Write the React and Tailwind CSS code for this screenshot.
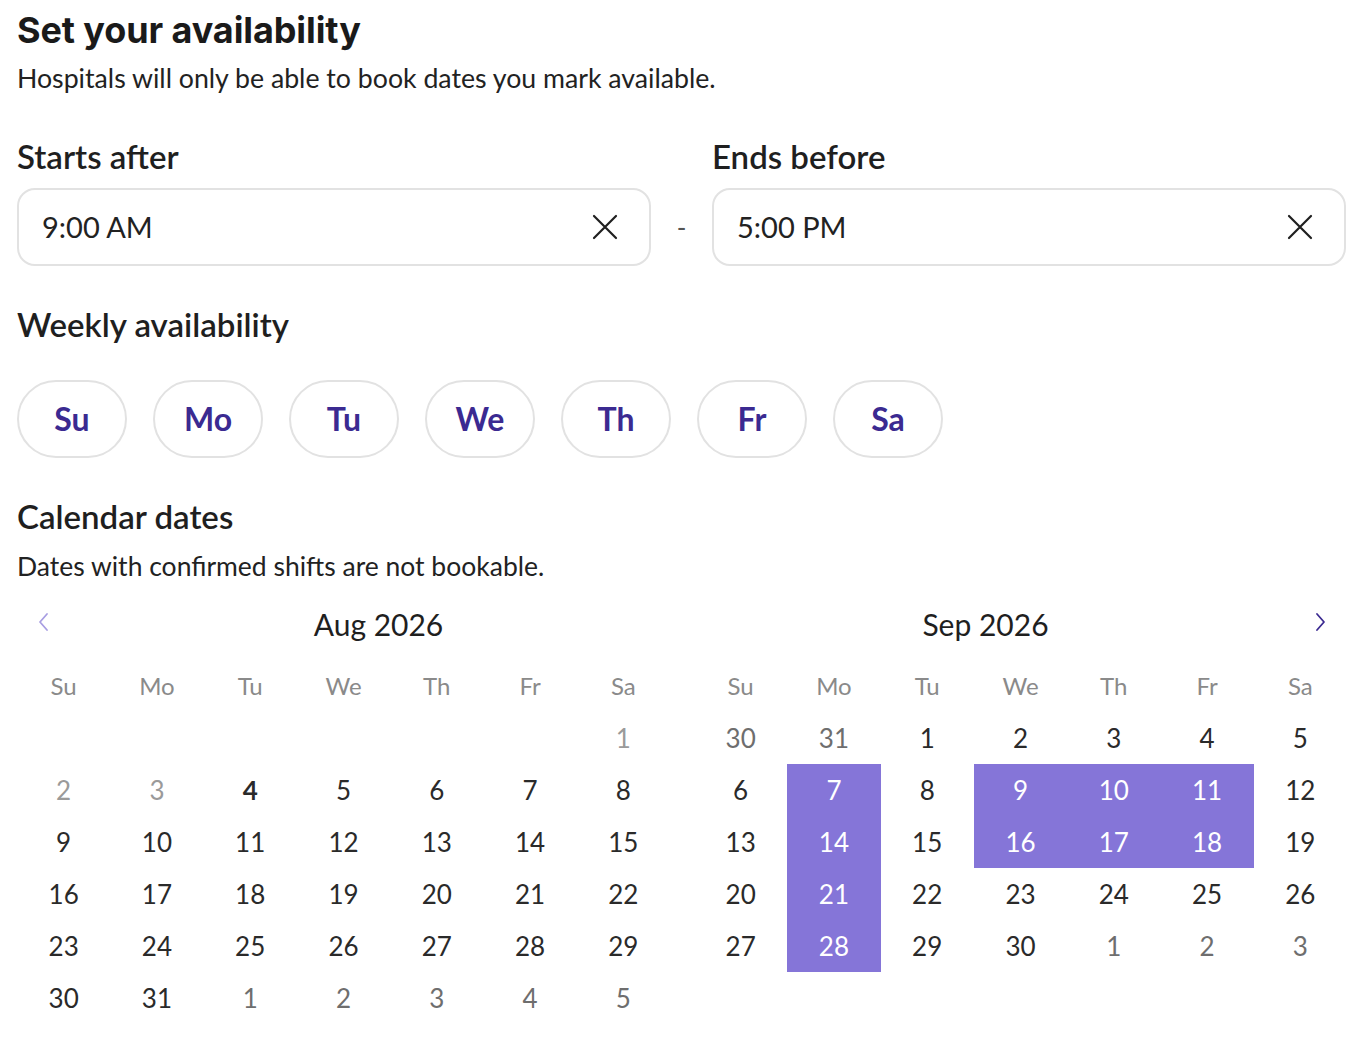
import React from "react";

const FONT = { fontFamily: "Lato, 'Liberation Sans', sans-serif" };
const TITLE_FONT = { fontFamily: "Inter, Lato, 'Liberation Sans', sans-serif" };

function XIcon() {
  return (
    <svg width="26" height="26" viewBox="0 0 26 26" fill="none">
      <path d="M2 2L24 24M24 2L2 24" stroke="#1f1f1f" strokeWidth="2.2" strokeLinecap="round" />
    </svg>
  );
}

function Chevron({ dir, color }) {
  return (
    <svg width="12" height="20" viewBox="0 0 12 20" fill="none">
      {dir === "left" ? (
        <path d="M10 2L3 10L10 18" stroke={color} strokeWidth="1.8" strokeLinecap="round" strokeLinejoin="round" />
      ) : (
        <path d="M2 2L9 10L2 18" stroke={color} strokeWidth="1.8" strokeLinecap="round" strokeLinejoin="round" />
      )}
    </svg>
  );
}

const WEEK = ["Su", "Mo", "Tu", "We", "Th", "Fr", "Sa"];

const AUG = [
  [["", "e"], ["", "e"], ["", "e"], ["", "e"], ["", "e"], ["", "e"], ["1", "p"]],
  [["2", "p"], ["3", "p"], ["4", "t"], ["5", "n"], ["6", "n"], ["7", "n"], ["8", "n"]],
  [["9", "n"], ["10", "n"], ["11", "n"], ["12", "n"], ["13", "n"], ["14", "n"], ["15", "n"]],
  [["16", "n"], ["17", "n"], ["18", "n"], ["19", "n"], ["20", "n"], ["21", "n"], ["22", "n"]],
  [["23", "n"], ["24", "n"], ["25", "n"], ["26", "n"], ["27", "n"], ["28", "n"], ["29", "n"]],
  [["30", "n"], ["31", "n"], ["1", "o"], ["2", "o"], ["3", "o"], ["4", "o"], ["5", "o"]],
];

const SEP = [
  [["30", "o"], ["31", "o"], ["1", "n"], ["2", "n"], ["3", "n"], ["4", "n"], ["5", "n"]],
  [["6", "n"], ["7", "s"], ["8", "n"], ["9", "s"], ["10", "s"], ["11", "s"], ["12", "n"]],
  [["13", "n"], ["14", "s"], ["15", "n"], ["16", "s"], ["17", "s"], ["18", "s"], ["19", "n"]],
  [["20", "n"], ["21", "s"], ["22", "n"], ["23", "n"], ["24", "n"], ["25", "n"], ["26", "n"]],
  [["27", "n"], ["28", "s"], ["29", "n"], ["30", "n"], ["1", "o"], ["2", "o"], ["3", "o"]],
];

function Cell({ v, k }) {
  if (k === "e") return <div className="h-[52px]" />;
  if (k === "s")
    return (
      <div className="h-[52px] flex items-center justify-center bg-[#8575d8] text-white text-[26px]">{v}</div>
    );
  const cls =
    k === "p"
      ? "text-[#9a9a9a]"
      : k === "o"
      ? "text-[#6e6e6e]"
      : k === "t"
      ? "text-[#2a2a2a] font-bold"
      : "text-[#2a2a2a]";
  return <div className={`h-[52px] flex items-center justify-center text-[26px] ${cls}`}>{v}</div>;
}

function Calendar({ title, rows, side }) {
  return (
    <div>
      <div className="flex items-center h-[40px]">
        {side === "left" ? (
          <div className="w-[70px] flex items-center justify-start pl-[20px] pb-[4px]">
            <Chevron dir="left" color="#a89ee2" />
          </div>
        ) : null}
        <div className="flex-1 text-center text-[30px] text-[#1f1f1f] leading-[40px]">{title}</div>
        {side === "right" ? (
          <div className="w-[70px] flex items-center justify-end pr-[20px] pb-[4px]">
            <Chevron dir="right" color="#3b2a91" />
          </div>
        ) : null}
      </div>
      <div className="grid grid-cols-7 mt-[16px]">
        {WEEK.map((w) => (
          <div key={w} className="h-[52px] flex items-center justify-center text-[24px] text-[#8a8a8a]">
            {w}
          </div>
        ))}
      </div>
      <div className="grid grid-cols-7">
        {rows.flat().map(([v, k], i) => (
          <Cell key={i} v={v} k={k} />
        ))}
      </div>
    </div>
  );
}

export default function App() {
  return (
    <div className="bg-white min-h-[1052px] px-[17px] pt-[8px]" style={FONT}>
      <h1
        className="h-[44px] leading-[44px] text-[36px] font-bold text-[#1a1a1a] tracking-[-0.1px]"
        style={TITLE_FONT}
      >
        Set your availability
      </h1>
      <p className="mt-[10px] leading-[32px] text-[26.7px] text-[#222]">
        Hospitals will only be able to book dates you mark available.
      </p>

      <div className="grid grid-cols-[634px_61px_634px] mt-[44px]">
        <div className="leading-[36px] text-[33px] font-semibold text-[#1f1f1f]">Starts after</div>
        <div />
        <div className="leading-[36px] text-[33px] font-semibold text-[#1f1f1f]">Ends before</div>

        <div className="mt-[14px] h-[78px] rounded-[18px] border-2 border-[#e2e2e2] flex items-center justify-between pl-[23px] pr-[31px]">
          <span className="text-[29px] text-[#222]">9:00 AM</span>
          <XIcon />
        </div>
        <div className="mt-[14px] h-[78px] flex items-center justify-center text-[26px] text-[#555]">-</div>
        <div className="mt-[14px] h-[78px] rounded-[18px] border-2 border-[#e2e2e2] flex items-center justify-between pl-[23px] pr-[31px]">
          <span className="text-[29px] text-[#222]">5:00 PM</span>
          <XIcon />
        </div>
      </div>

      <div className="mt-[40px] leading-[36px] text-[33px] font-semibold text-[#1f1f1f]">Weekly availability</div>
      <div className="mt-[38px] flex gap-[26px]">
        {WEEK.map((d) => (
          <div
            key={d}
            className="w-[110px] h-[78px] rounded-full border-2 border-[#e2e2e2] flex items-center justify-center text-[32px] font-bold text-[#3b2a91]"
          >
            {d}
          </div>
        ))}
      </div>

      <div className="mt-[40px] leading-[36px] text-[33px] font-semibold text-[#1f1f1f]">Calendar dates</div>
      <p className="mt-[16px] leading-[32px] text-[26.5px] text-[#222]">Dates with confirmed shifts are not bookable.</p>

      <div className="mt-[22px] grid grid-cols-2 gap-[24px] w-[1330px]">
        <Calendar title="Aug 2026" rows={AUG} side="left" />
        <Calendar title="Sep 2026" rows={SEP} side="right" />
      </div>
    </div>
  );
}
